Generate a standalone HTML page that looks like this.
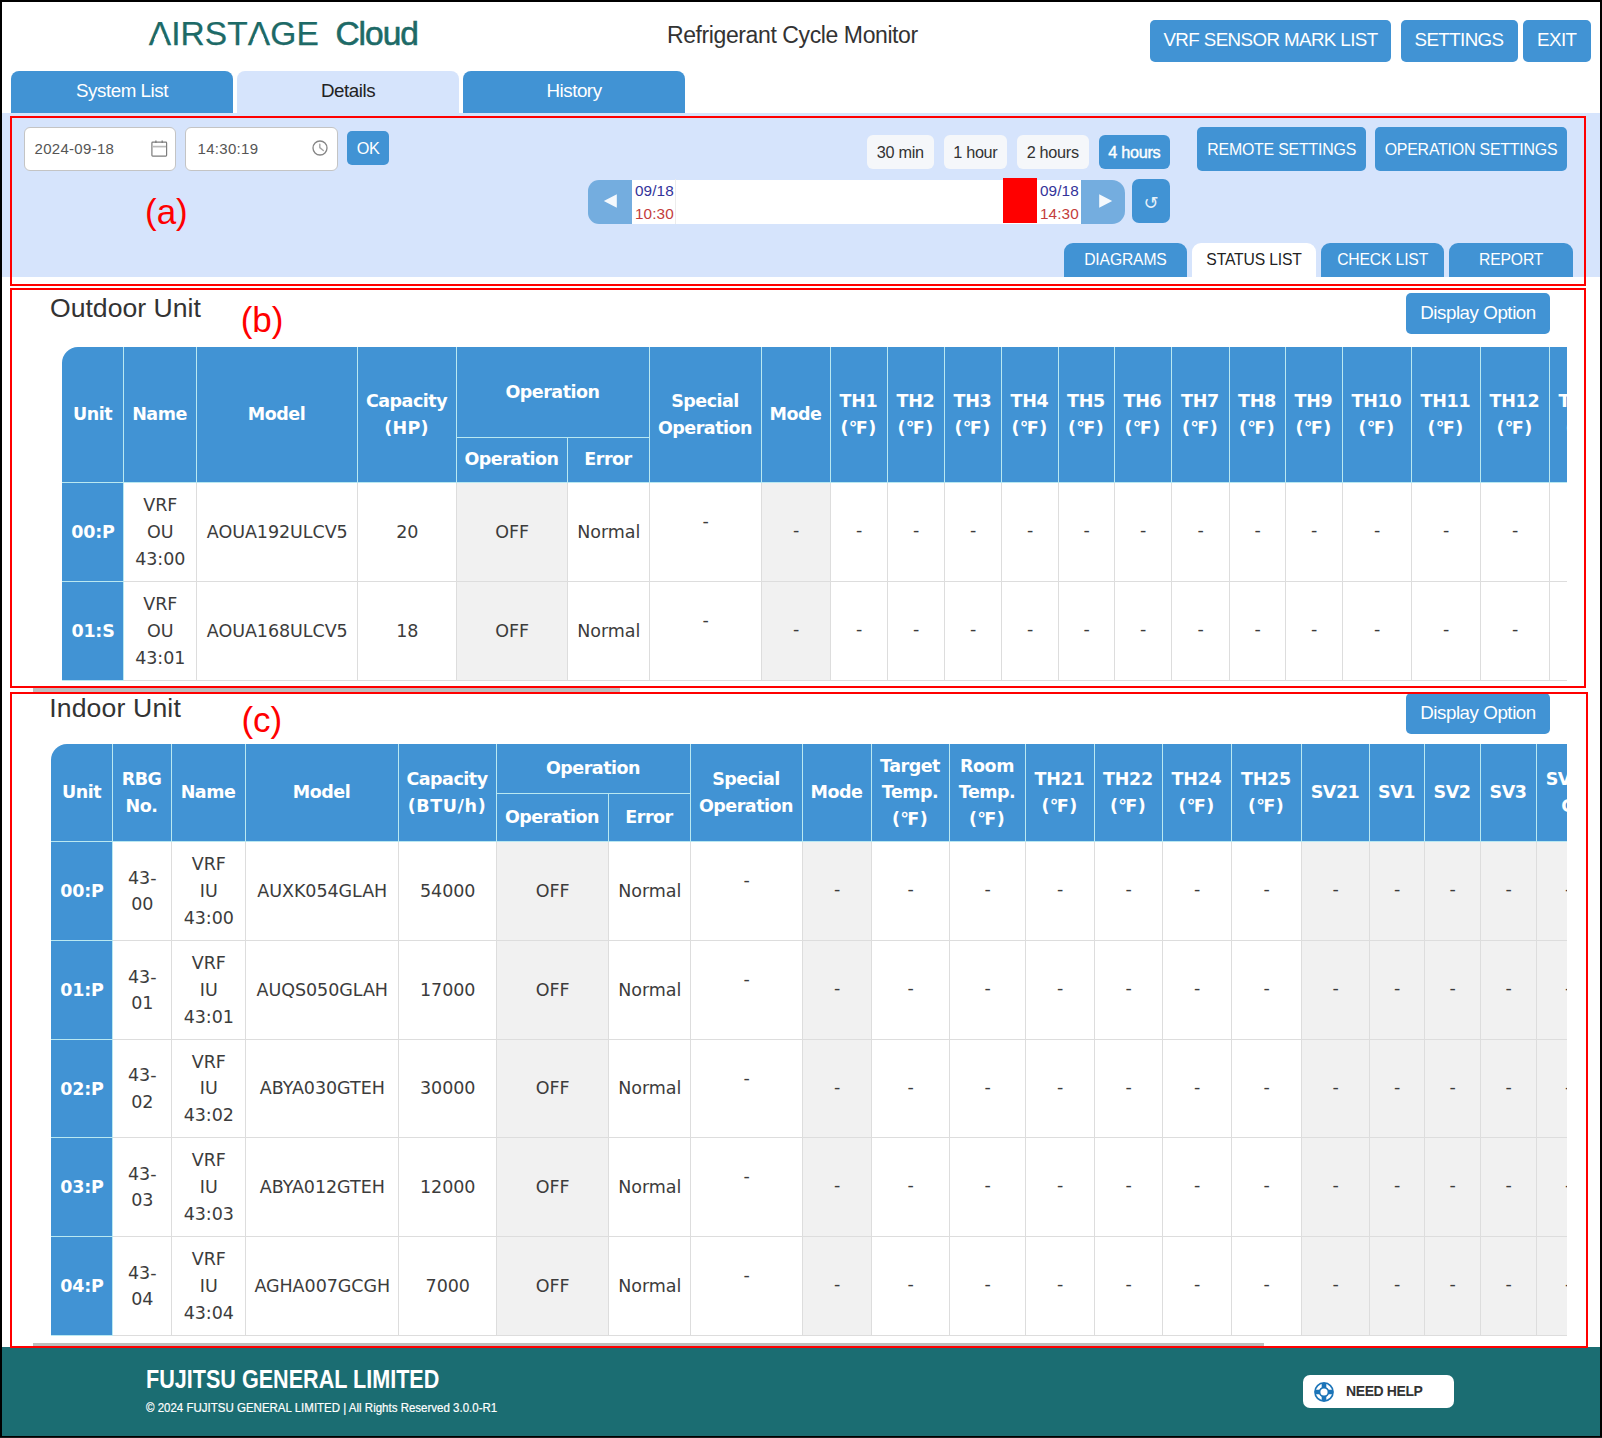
<!DOCTYPE html>
<html lang="en">
<head>
<meta charset="utf-8">
<title>Refrigerant Cycle Monitor</title>
<style>
*{box-sizing:border-box;margin:0;padding:0}
html,body{width:1602px;height:1438px;overflow:hidden;background:#fff}
body{position:relative;font-family:"Liberation Sans",sans-serif;color:#333}
.abs{position:absolute}
.frame{position:absolute;left:0;top:0;width:1602px;height:1438px;border:2px solid #000;z-index:50;pointer-events:none}
.redbox{position:absolute;border:2px solid #f00;z-index:40;pointer-events:none}
.mark{position:absolute;color:#f00;font-size:35px;line-height:40px;z-index:41;white-space:nowrap}
.btn{position:absolute;background:#4193d4;color:#fff;border-radius:5px;text-align:center;white-space:nowrap}
/* header */
.logo{position:absolute;left:148.7px;top:13.6px;height:40px;line-height:40px;font-size:33.5px;color:#1d6a67;white-space:nowrap}
.logo .air{letter-spacing:0.1px;-webkit-text-stroke:0.25px #1d6a67}
.logo .cloud{margin-left:7.2px;letter-spacing:-1.0px;-webkit-text-stroke:0.6px #1d6a67}
.la{position:relative;display:inline-block;line-height:1;letter-spacing:0;margin-right:0.1px}
.la i{position:absolute;left:0;top:0;width:0.667em;height:1em;background:#fff;clip-path:polygon(0.2267em 0.530em,0.442em 0.530em,0.5125em 0.70em,0.156em 0.70em)}
.title{position:absolute;left:667px;top:21.3px;font-size:23px;line-height:28px;color:#333;letter-spacing:-0.4px;white-space:nowrap}
.topbtn{top:20px;height:42px;line-height:39.5px;font-size:18.75px;letter-spacing:-0.6px}
/* main tabs */
.tab{position:absolute;top:71px;height:42px;line-height:40px;width:222px;border-radius:8px 8px 0 0;background:#4193d4;color:#fff;font-size:18.75px;letter-spacing:-0.45px;text-align:center}
.tab.on{background:#d6e4fc;color:#222}
.panel{position:absolute;left:0;top:113px;width:1602px;height:164px;background:#d6e4fc}
.inp{position:absolute;top:126.5px;height:44px;background:#fff;border:1px solid #c4c4c4;border-radius:6px;font-size:15px;letter-spacing:0.3px;line-height:42px;color:#555;padding-left:9.5px}
.rng{position:absolute;top:135px;height:34px;line-height:34px;border-radius:6px;background:#f5f7fa;color:#333;font-size:16.25px;text-align:center;letter-spacing:-0.3px}
.rng.on{background:#4193d4;color:#fff;-webkit-text-stroke:0.4px #fff}
.subtab{position:absolute;top:243px;height:34px;line-height:33px;width:123.7px;border-radius:9px 9px 0 0;background:#4193d4;color:#fff;font-size:15.7px;letter-spacing:-0.15px;text-align:center}
.subtab.on{background:#fff;color:#222}
.h2{position:absolute;font-size:26.6px;line-height:32px;color:#333;white-space:nowrap}
/* tables */
.wrap{position:absolute;overflow:hidden}
table{border-collapse:collapse;table-layout:fixed;font-family:"DejaVu Sans","Noto Sans CJK JP",sans-serif;font-size:17.5px;line-height:26.25px;color:#333}
th,td{text-align:center;vertical-align:middle;padding:0;overflow:hidden}
th{background:#4193d4;color:#fff;font-weight:bold;border:1px solid #b9e8f1;letter-spacing:-0.5px}
th.t{letter-spacing:-0.2px}
td{background:#fff;border:1px solid #ddd;padding-top:1.5px;padding-left:1.5px;color:#3c3c3c;letter-spacing:-0.05px;line-height:26.7px}
td.d{padding-top:0;padding-bottom:2px}
tbody th{padding-top:1.5px;padding-left:1px;letter-spacing:-0.2px}
th b{letter-spacing:0.4px}
td.g{background:#f1f1f1}
thead tr:first-child th{border-top-color:#4193d4}
th.c0{border-left-color:#4193d4}
td.sp span{position:relative;top:-10.5px}
.footer{position:absolute;left:0;top:1347px;width:1602px;height:91px;background:#1b6d72}
</style>
</head>
<body>
<div class="logo"><span class="air"><span class="la">A<i></i></span>IRST<span class="la">A<i></i></span>GE</span> <span class="cloud">Cloud</span></div>
<div class="title">Refrigerant Cycle Monitor</div>
<div class="btn topbtn" style="left:1150px;width:241px">VRF SENSOR MARK LIST</div>
<div class="btn topbtn" style="left:1400.5px;width:117px">SETTINGS</div>
<div class="btn topbtn" style="left:1522.5px;width:68.5px">EXIT</div>
<div class="tab" style="left:11px">System List</div>
<div class="tab on" style="left:237px">Details</div>
<div class="tab" style="left:463px">History</div>

<div class="panel"></div>
<div class="inp" style="left:24px;width:152px">2024-09-18
<svg class="abs" style="left:124.5px;top:12px" width="18" height="18" viewBox="0 0 18 18" fill="none" stroke="#7c7c7c" stroke-width="1.2"><rect x="1.9" y="2.1" width="14.7" height="14" rx="0.8"/><path d="M2.4 6.6h13.7" stroke="#b9b9b9" stroke-width="1.7"/><path d="M5.9 0.5v2.6M12.2 0.5v2.6" stroke-width="1.3"/></svg>
</div>
<div class="inp" style="left:185px;width:153px;padding-left:11.5px">14:30:19
<svg class="abs" style="left:125.45px;top:11.7px" width="18" height="18" viewBox="0 0 18 18" fill="none" stroke="#858585" stroke-width="1.3"><circle cx="9" cy="9" r="7"/><path d="M8.8 5.3V8.6l3.5 2.9" stroke="#a4a4a4" stroke-width="1.4" stroke-linecap="round" stroke-linejoin="round"/></svg>
</div>
<div class="btn" style="left:347px;top:131px;width:42px;height:34px;line-height:35px;font-size:16.25px;letter-spacing:-0.5px">OK</div>
<div class="rng" style="left:867px;width:66.5px">30 min</div>
<div class="rng" style="left:943.7px;width:63.3px">1 hour</div>
<div class="rng" style="left:1016.7px;width:72px">2 hours</div>
<div class="rng on" style="left:1098.7px;width:71.2px">4 hours</div>
<div class="btn" style="left:1197.3px;top:127.3px;width:168.7px;height:44px;line-height:46px;font-size:15.9px;letter-spacing:-0.2px">REMOTE SETTINGS</div>
<div class="btn" style="left:1375px;top:127.3px;width:192px;height:44px;line-height:46px;font-size:15.9px;letter-spacing:-0.2px">OPERATION SETTINGS</div>
<!-- slider -->
<div class="abs" style="left:587.7px;top:179.5px;width:44.3px;height:44px;background:#74addf;border-radius:11px 0 0 11px"><svg class="abs" style="left:13.3px;top:12.3px" width="18" height="18" viewBox="0 0 18 18"><path d="M2.8 9l13-6.7v13.4z" fill="#fff" fill-opacity="0.93"/></svg></div>
<div class="abs" style="left:632px;top:179.5px;width:449px;height:44px;background:#fff"></div>
<div class="abs" style="left:635px;top:178.5px;width:40.5px;height:45px;border-right:1px solid #ececec;font-size:15.3px;line-height:23.2px;color:#33339a;white-space:nowrap;letter-spacing:0.1px"><div>09/18</div><div style="color:#c43c3c">10:30</div></div>
<div class="abs" style="left:1002.5px;top:178px;width:34.5px;height:44.5px;background:#f00"></div>
<div class="abs" style="left:1040px;top:178.5px;width:41px;height:45px;font-size:15.3px;line-height:23.2px;color:#33339a;white-space:nowrap;letter-spacing:0.1px"><div>09/18</div><div style="color:#c43c3c">14:30</div></div>
<div class="abs" style="left:1081px;top:179.5px;width:43.8px;height:44px;background:#74addf;border-radius:0 13px 13px 0"><svg class="abs" style="left:15.5px;top:12.3px" width="18" height="18" viewBox="0 0 18 18"><path d="M15.2 9l-13-6.7v13.4z" fill="#fff" fill-opacity="0.93"/></svg></div>
<div class="btn" style="left:1132px;top:178.5px;width:38px;height:44px;line-height:47.5px;font-size:18px;font-family:'DejaVu Sans',sans-serif;border-radius:7px;color:rgba(255,255,255,.88)">&#8634;</div>
<div class="subtab" style="left:1063.6px">DIAGRAMS</div>
<div class="subtab on" style="left:1192.2px">STATUS LIST</div>
<div class="subtab" style="left:1320.8px">CHECK LIST</div>
<div class="subtab" style="left:1449.3px">REPORT</div>

<!--OUTDOOR-->
<div class="h2" style="left:50px;top:291.5px">Outdoor Unit</div>
<div class="btn" style="left:1406px;top:293px;width:144px;height:41px;line-height:40px;font-size:18.75px;letter-spacing:-0.45px">Display Option</div>
<div class="wrap" style="left:61.5px;top:346.5px;width:1505px;height:336px;border-top-left-radius:16px"><table style="width:1556px"><colgroup><col style="width:61px"><col style="width:73px"><col style="width:161px"><col style="width:99px"><col style="width:111px"><col style="width:82px"><col style="width:112px"><col style="width:69px"><col style="width:57px"><col style="width:57px"><col style="width:57px"><col style="width:57px"><col style="width:56px"><col style="width:57px"><col style="width:58px"><col style="width:56px"><col style="width:57px"><col style="width:69px"><col style="width:69px"><col style="width:69px"><col style="width:69px"></colgroup>
<thead>
<tr style="height:90px"><th rowspan="2" class=c0>Unit</th><th rowspan="2">Name</th><th rowspan="2">Model</th><th rowspan="2">Capacity<br><b style="letter-spacing:0.2px">(HP)</b></th><th colspan="2">Operation</th><th rowspan="2">Special<br>Operation</th><th rowspan="2">Mode</th><th rowspan="2" class=t>TH1<br><b>(&#8457;)</b></th><th rowspan="2" class=t>TH2<br><b>(&#8457;)</b></th><th rowspan="2" class=t>TH3<br><b>(&#8457;)</b></th><th rowspan="2" class=t>TH4<br><b>(&#8457;)</b></th><th rowspan="2" class=t>TH5<br><b>(&#8457;)</b></th><th rowspan="2" class=t>TH6<br><b>(&#8457;)</b></th><th rowspan="2" class=t>TH7<br><b>(&#8457;)</b></th><th rowspan="2" class=t>TH8<br><b>(&#8457;)</b></th><th rowspan="2" class=t>TH9<br><b>(&#8457;)</b></th><th rowspan="2" class=t>TH10<br><b>(&#8457;)</b></th><th rowspan="2" class=t>TH11<br><b>(&#8457;)</b></th><th rowspan="2" class=t>TH12<br><b>(&#8457;)</b></th><th rowspan="2" class=t>TH13<br><b>(&#8457;)</b></th></tr>
<tr style="height:45px"><th>Operation</th><th>Error</th></tr>
</thead>
<tbody>
<tr style="height:99px"><th class="c0">00:P</th><td>VRF<br>OU<br>43:00</td><td>AOUA192ULCV5</td><td>20</td><td class="g">OFF</td><td>Normal</td><td class="sp"><span>-</span></td><td class="g d">-</td><td class="d">-</td><td class="d">-</td><td class="d">-</td><td class="d">-</td><td class="d">-</td><td class="d">-</td><td class="d">-</td><td class="d">-</td><td class="d">-</td><td class="d">-</td><td class="d">-</td><td class="d">-</td><td class="d">-</td></tr>
<tr style="height:99px"><th class="c0">01:S</th><td>VRF<br>OU<br>43:01</td><td>AOUA168ULCV5</td><td>18</td><td class="g">OFF</td><td>Normal</td><td class="sp"><span>-</span></td><td class="g d">-</td><td class="d">-</td><td class="d">-</td><td class="d">-</td><td class="d">-</td><td class="d">-</td><td class="d">-</td><td class="d">-</td><td class="d">-</td><td class="d">-</td><td class="d">-</td><td class="d">-</td><td class="d">-</td><td class="d">-</td></tr>
</tbody></table></div>
<div class="abs" style="left:33px;top:688px;width:587px;height:4px;background:#bdbdbd"></div>
<!--/OUTDOOR-->
<!--INDOOR-->
<div class="h2" style="left:49.2px;top:691.5px;letter-spacing:0.15px">Indoor Unit</div>
<div class="btn" style="left:1406px;top:693px;width:144px;height:41px;line-height:40px;font-size:18.75px;letter-spacing:-0.45px">Display Option</div>
<div class="wrap" style="left:50.5px;top:743.5px;width:1516px;height:594px;border-top-left-radius:16px"><table style="width:1548px"><colgroup><col style="width:61px"><col style="width:59px"><col style="width:74px"><col style="width:153px"><col style="width:98px"><col style="width:112px"><col style="width:82px"><col style="width:112px"><col style="width:69px"><col style="width:78px"><col style="width:76px"><col style="width:69px"><col style="width:68px"><col style="width:69px"><col style="width:70px"><col style="width:68px"><col style="width:55px"><col style="width:56px"><col style="width:56px"><col style="width:63px"></colgroup>
<thead>
<tr style="height:49px"><th rowspan="2" class=c0>Unit</th><th rowspan="2">RBG<br>No.</th><th rowspan="2">Name</th><th rowspan="2">Model</th><th rowspan="2">Capacity<br><b style="letter-spacing:0.6px">(BTU/h)</b></th><th colspan="2">Operation</th><th rowspan="2">Special<br>Operation</th><th rowspan="2">Mode</th><th rowspan="2">Target<br>Temp.<br><b>(&#8457;)</b></th><th rowspan="2">Room<br>Temp.<br><b>(&#8457;)</b></th><th rowspan="2" class=t>TH21<br><b>(&#8457;)</b></th><th rowspan="2" class=t>TH22<br><b>(&#8457;)</b></th><th rowspan="2" class=t>TH24<br><b>(&#8457;)</b></th><th rowspan="2" class=t>TH25<br><b>(&#8457;)</b></th><th rowspan="2">SV21</th><th rowspan="2">SV1</th><th rowspan="2">SV2</th><th rowspan="2">SV3</th><th rowspan="2">SV1-<br>C</th></tr>
<tr style="height:48px"><th>Operation</th><th>Error</th></tr>
</thead>
<tbody>
<tr style="height:99px"><th class="c0">00:P</th><td>43-<br>00</td><td>VRF<br>IU<br>43:00</td><td>AUXK054GLAH</td><td>54000</td><td class="g">OFF</td><td>Normal</td><td class="sp"><span>-</span></td><td class="g d">-</td><td class="d">-</td><td class="d">-</td><td class="d">-</td><td class="d">-</td><td class="d">-</td><td class="d">-</td><td class="g d">-</td><td class="g d">-</td><td class="g d">-</td><td class="g d">-</td><td class="g d">-</td></tr>
<tr style="height:99px"><th class="c0">01:P</th><td>43-<br>01</td><td>VRF<br>IU<br>43:01</td><td>AUQS050GLAH</td><td>17000</td><td class="g">OFF</td><td>Normal</td><td class="sp"><span>-</span></td><td class="g d">-</td><td class="d">-</td><td class="d">-</td><td class="d">-</td><td class="d">-</td><td class="d">-</td><td class="d">-</td><td class="g d">-</td><td class="g d">-</td><td class="g d">-</td><td class="g d">-</td><td class="g d">-</td></tr>
<tr style="height:98px"><th class="c0">02:P</th><td>43-<br>02</td><td>VRF<br>IU<br>43:02</td><td>ABYA030GTEH</td><td>30000</td><td class="g">OFF</td><td>Normal</td><td class="sp"><span>-</span></td><td class="g d">-</td><td class="d">-</td><td class="d">-</td><td class="d">-</td><td class="d">-</td><td class="d">-</td><td class="d">-</td><td class="g d">-</td><td class="g d">-</td><td class="g d">-</td><td class="g d">-</td><td class="g d">-</td></tr>
<tr style="height:99px"><th class="c0">03:P</th><td>43-<br>03</td><td>VRF<br>IU<br>43:03</td><td>ABYA012GTEH</td><td>12000</td><td class="g">OFF</td><td>Normal</td><td class="sp"><span>-</span></td><td class="g d">-</td><td class="d">-</td><td class="d">-</td><td class="d">-</td><td class="d">-</td><td class="d">-</td><td class="d">-</td><td class="g d">-</td><td class="g d">-</td><td class="g d">-</td><td class="g d">-</td><td class="g d">-</td></tr>
<tr style="height:99px"><th class="c0">04:P</th><td>43-<br>04</td><td>VRF<br>IU<br>43:04</td><td>AGHA007GCGH</td><td>7000</td><td class="g">OFF</td><td>Normal</td><td class="sp"><span>-</span></td><td class="g d">-</td><td class="d">-</td><td class="d">-</td><td class="d">-</td><td class="d">-</td><td class="d">-</td><td class="d">-</td><td class="g d">-</td><td class="g d">-</td><td class="g d">-</td><td class="g d">-</td><td class="g d">-</td></tr>
</tbody></table></div>
<div class="abs" style="left:33px;top:1343px;width:1230.5px;height:4px;background:#bdbdbd"></div>
<!--/INDOOR-->
<!--FOOTER-->
<div class="footer">
<div class="abs" style="left:146px;top:17px;font-size:26px;line-height:30px;font-weight:bold;color:#fff;white-space:nowrap;transform-origin:0 0;transform:scaleX(0.83)">FUJITSU GENERAL LIMITED</div>
<div class="abs" style="left:146px;top:52.5px;font-size:13px;line-height:16px;color:#fff;-webkit-text-stroke:0.2px #fff;white-space:nowrap;transform-origin:0 0;transform:scaleX(0.885)">&copy; 2024 FUJITSU GENERAL LIMITED | All Rights Reserved 3.0.0-R1</div>
<div class="abs" style="left:1303px;top:28px;width:151px;height:33px;background:#fff;border-radius:7px">
<svg class="abs" style="left:10px;top:5.5px" width="22" height="22" viewBox="-11 -11 22 22"><circle r="9.9" fill="#1b74b8"/><circle r="6.75" fill="none" stroke="#fff" stroke-width="3"/><path d="M-2.3 -9h4.6v18h-4.6zM-9 -2.3h18v4.6h-18z" fill="#1b74b8"/><circle r="3.6" fill="#fff"/></svg>
<div class="abs" style="left:43px;top:0;line-height:33px;font-size:14px;font-weight:bold;color:#333;letter-spacing:-0.4px;white-space:nowrap">NEED HELP</div>
</div>
</div>
<!--/FOOTER-->
<div class="redbox" style="left:10px;top:116px;width:1576px;height:170px"></div>
<div class="redbox" style="left:10px;top:288px;width:1576px;height:400px"></div>
<div class="redbox" style="left:10px;top:692px;width:1578px;height:656px"></div>
<div class="mark" style="left:145px;top:192px">(a)</div>
<div class="mark" style="left:240.7px;top:300px">(b)</div>
<div class="mark" style="left:241.4px;top:700px">(c)</div>
<div class="frame"></div>
<div class="abs" style="left:0;top:1437px;width:1602px;height:1px;background:#1c1c1c;z-index:51"></div>

</body>
</html>
